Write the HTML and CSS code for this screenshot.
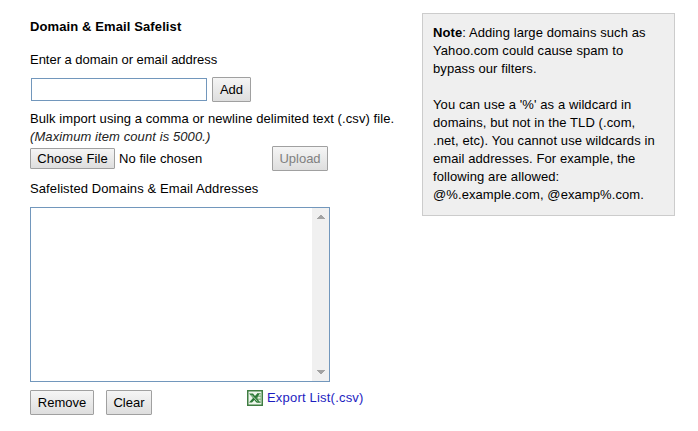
FILE: index.html
```html
<!DOCTYPE html>
<html lang="en">
<head>
<meta charset="utf-8">
<title>Domain &amp; Email Safelist</title>
<link rel="stylesheet" href="styles.css">
</head>
<body>
<main class="page">
  <section class="form">
    <h1 class="title">Domain &amp; Email Safelist</h1>
    <label class="entry-label" for="entry">Enter a domain or email address</label>
    <div class="entry-row">
      <input class="entry" id="entry" type="text">
      <button class="btn btn-add">Add</button>
    </div>
    <p class="import-text">Bulk import using a comma or newline delimited text (.csv) file.</p>
    <p class="import-limit">(Maximum item count is 5000.)</p>
    <div class="file-row">
      <button class="btn btn-file">Choose File</button>
      <span class="file-name">No file chosen</span>
      <button class="btn btn-upload" disabled>Upload</button>
    </div>
    <p class="list-label">Safelisted Domains &amp; Email Addresses</p>
    <div class="list">
      <div class="scrollbar">
        <svg width="8" height="4" viewBox="0 0 8 4" shape-rendering="crispEdges"><path d="M3 0h2v1h1v1h1v1h1v1H0V3h1V2h1V1h1z"/></svg>
        <svg width="8" height="4" viewBox="0 0 8 4" shape-rendering="crispEdges"><path d="M0 0h8v1H7v1H6v1H5v1H3V3H2V2H1V1H0z"/></svg>
      </div>
    </div>
    <div class="action-row">
      <button class="btn btn-remove">Remove</button>
      <button class="btn btn-clear">Clear</button>
      <a class="export">
        <svg class="sheet" width="16" height="16" viewBox="0 0 16 16">
          <path fill="#3f7d42" d="M0 0h16v16H0z"/>
          <path fill="#eef6ec" d="M1.500 1.500h13v13h-13z"/>
          <path fill="#8fbb8b" d="M10 3h4v10h-4z"/>
          <path fill="#e4f0e2" d="M11 4h2.500v1.500H11zm0 3h2.500v1.500H11zm0 3h2.500v1.500H11z"/>
          <path fill="#2c7937" d="M2 3.500h4l2 2.500 2.200-2.500H13L9.600 8l3.700 4.500H9.300L7.400 10 5 12.500H2L6 8z"/>
          <path stroke="#d9ebd5" stroke-width=".8" d="M4.300 4.800l6.200 6.600"/>
        </svg>
        <span class="export-text">Export List(.csv)</span>
      </a>
    </div>
  </section>
  <aside class="note">
    <p><b>Note</b>: Adding large domains such as<br>Yahoo.com could cause spam to<br>bypass our filters.</p>
    <p>You can use a '%' as a wildcard in<br>domains, but not in the TLD (.com,<br>.net, etc). You cannot use wildcards in<br>email addresses. For example, the<br>following are allowed:<br>@%.example.com, @examp%.com.</p>
  </aside>
</main>
</body>
</html>
```
FILE: styles.css
```css
* { box-sizing: border-box; }
body {
  margin: 0;
  background: #fff;
  color: #000;
  font: 13px/18px "Liberation Sans", Arial, sans-serif;
}
p, h1 { margin: 0; }
.page {
  display: flex;
  align-items: flex-start;
  padding: 13px 23px 0 30px;
}
.form {
  display: flex;
  flex-direction: column;
  width: 392px;
  padding-top: 5px;
  white-space: nowrap;
}
.title { font-size: 13px; line-height: 18px; letter-spacing: .11px; }
.entry-label { margin-top: 15px; letter-spacing: -.02px; }
.entry-row { display: flex; align-items: center; gap: 5px; margin: 8px 0 0 1px; }
.entry {
  width: 176px;
  height: 23px;
  padding: 1px 2px;
  border: 1px solid #7297bc;
  background: #fff;
  font: inherit;
}
.btn {
  height: 25px;
  padding: 0;
  border: 1px solid #a0a0a0;
  border-radius: 1px;
  background: linear-gradient(#f5f5f5, #dedede);
  color: #000;
  font: 13px/18px "Liberation Sans", Arial, sans-serif;
  text-align: center;
}
.btn-add { width: 39px; }
.import-text { margin-top: 8px; letter-spacing: .08px; }
.import-limit { color: #222; font-style: italic; letter-spacing: .09px; }
.file-row { display: flex; align-items: center; height: 25px; }
.btn-file { width: 85px; height: 21px; letter-spacing: .1px; }
.file-name { width: 153px; margin-left: 4px; letter-spacing: .06px; }
.btn-upload { width: 56px; color: #808080; }
.list-label { margin-top: 9px; letter-spacing: .1px; }
.list {
  display: flex;
  justify-content: flex-end;
  width: 300px;
  height: 175px;
  margin-top: 9px;
  border: 1px solid #7297bc;
}
.scrollbar {
  display: flex;
  flex-direction: column;
  justify-content: space-between;
  align-items: center;
  width: 17px;
  padding: 7px 0;
  background: #f0f0f0;
  fill: #a3a3a3;
}
.action-row { display: flex; margin-top: 8px; }
.btn-remove { width: 64px; }
.btn-clear { width: 46px; margin-left: 12px; }
.export { display: flex; height: 16px; margin-left: 95px; color: #1d1dbf; }
.export-text { margin-left: 4px; line-height: 16px; letter-spacing: .2px; }
.note {
  width: 253px;
  height: 203px;
  padding: 10px;
  border: 1px solid #ccc;
  background: #efefef;
  letter-spacing: .09px;
  white-space: nowrap;
}
.note p + p { margin-top: 18px; }
```
